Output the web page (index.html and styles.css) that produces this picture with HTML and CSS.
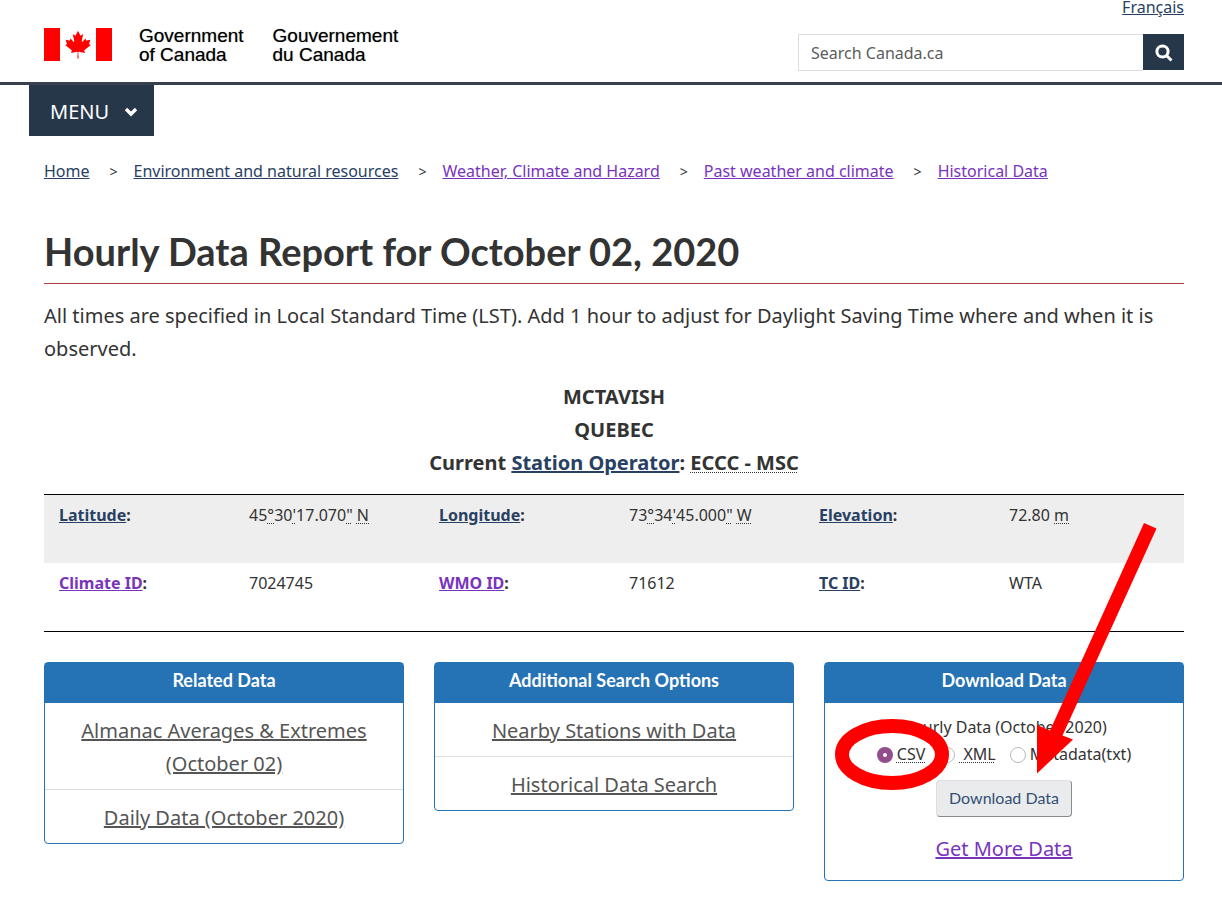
FILE: index.html
```html
<!DOCTYPE html>
<html lang="en">
<head>
<meta charset="utf-8">
<title>Hourly Data Report for October 02, 2020</title>
<link rel="stylesheet" href="styles.css">
</head>
<body>
<header class="site-header">
  <a class="brand" href="#" aria-label="Government of Canada">
    <svg class="flag" viewBox="0 0 9890 4800" aria-hidden="true">
      <path d="M0 0h2330v4800H0zM7560 0h2330v4800H7560z"/>
      <path transform="translate(145 0)" d="m4890 4430-45-863a95 95 0 0 1 111-98l859 151-116-320a65 65 0 0 1 20-73l941-762-212-99a65 65 0 0 1-34-79l186-572-542 115a65 65 0 0 1-73-38l-105-247-423 454a65 65 0 0 1-111-57l204-1052-327 189a65 65 0 0 1-91-27l-332-652-332 652a65 65 0 0 1-91 27l-327-189 204 1052a65 65 0 0 1-111 57l-423-454-105 247a65 65 0 0 1-73 38l-542-115 186 572a65 65 0 0 1-34 79l-212 99 941 762a65 65 0 0 1 20 73l-116 320 859-151a95 95 0 0 1 111 98l-45 863z"/>
    </svg>
    <span class="brand-name">Government<br>of Canada</span>
    <span class="brand-name" lang="fr">Gouvernement<br>du Canada</span>
  </a>
  <div class="header-tools">
    <a class="language" href="#" lang="fr">Français</a>
    <form class="search">
      <input class="search-box" type="search" placeholder="Search Canada.ca" aria-label="Search Canada.ca">
      <button class="search-button" type="button" aria-label="Search">
        <svg viewBox="0 0 18 18" aria-hidden="true"><circle cx="7.500" cy="7.500" r="5.600"/><path d="m11.500 11.500 5 5"/></svg>
      </button>
    </form>
  </div>
</header>
<nav class="menu-bar">
  <button class="menu-button" type="button">MENU
    <svg viewBox="0 0 14 10" aria-hidden="true"><path d="m2 2 5 5 5-5"/></svg>
  </button>
</nav>
<nav aria-label="Breadcrumb">
  <ol class="breadcrumb">
    <li><a href="#">Home</a></li>
    <li><a href="#">Environment and natural resources</a></li>
    <li><a class="visited" href="#">Weather, Climate and Hazard</a></li>
    <li><a class="visited" href="#">Past weather and climate</a></li>
    <li><a class="visited" href="#">Historical Data</a></li>
  </ol>
</nav>
<main class="content">
  <h1>Hourly Data Report for October 02, 2020</h1>
  <p class="intro">All times are specified in Local Standard Time (LST). Add 1 hour to adjust for Daylight Saving Time where and when it is observed.</p>
  <div class="station">
    <div>MCTAVISH</div>
    <div>QUEBEC</div>
    <div>Current <a href="#">Station Operator</a>: <abbr>ECCC - MSC</abbr></div>
  </div>
  <table class="metadata">
    <tr>
      <th scope="row"><a href="#">Latitude</a>:</th>
      <td>45<abbr>°</abbr>30<abbr>'</abbr>17.070<abbr>"</abbr> <abbr>N</abbr></td>
      <th scope="row"><a href="#">Longitude</a>:</th>
      <td>73<abbr>°</abbr>34<abbr>'</abbr>45.000<abbr>"</abbr> <abbr>W</abbr></td>
      <th scope="row"><a href="#">Elevation</a>:</th>
      <td>72.80 <abbr>m</abbr></td>
    </tr>
    <tr>
      <th scope="row"><a class="visited" href="#">Climate ID</a>:</th>
      <td>7024745</td>
      <th scope="row"><a class="visited" href="#">WMO ID</a>:</th>
      <td>71612</td>
      <th scope="row"><a href="#">TC ID</a>:</th>
      <td>WTA</td>
    </tr>
  </table>
  <div class="panels">
    <section class="panel">
      <h2>Related Data</h2>
      <ul class="panel-links">
        <li><a href="#">Almanac Averages &amp; Extremes (October 02)</a></li>
        <li><a href="#">Daily Data (October 2020)</a></li>
      </ul>
    </section>
    <section class="panel">
      <h2>Additional Search Options</h2>
      <ul class="panel-links">
        <li><a href="#">Nearby Stations with Data</a></li>
        <li><a href="#">Historical Data Search</a></li>
      </ul>
    </section>
    <section class="panel">
      <h2>Download Data</h2>
      <form class="download">
        <fieldset class="formats">
          <legend>Hourly Data (October 2020)</legend>
          <div class="format-row">
            <label><input type="radio" name="format" checked><abbr>CSV</abbr></label>
            <label><input type="radio" name="format"><abbr>&nbsp;XML</abbr></label>
            <label><input type="radio" name="format">Metadata(txt)</label>
          </div>
        </fieldset>
        <button class="download-button" type="button">Download Data</button>
        <a class="more visited" href="#">Get More Data</a>
      </form>
      <svg class="callout" viewBox="824 520 360 280" aria-hidden="true">
        <ellipse cx="892" cy="754.5" rx="50" ry="28.5"/>
        <path d="M1144 523l12.500 5.500L1062.500 735.500 1073 739.500 1037 773.500V725l13 5.500z"/>
      </svg>
    </section>
  </div>
</main>
</body>
</html>
```
FILE: styles.css
```css
* { box-sizing: border-box; }

body {
  margin: 0;
  background: #fff;
  color: #333;
  font: 20px/33px "Noto Sans", sans-serif;
}

a { color: #284162; }
a.visited { color: #7834bc; }
button, input { font-family: inherit; margin: 0; }
ul, ol { list-style: none; margin: 0; padding: 0; }

abbr {
  text-decoration: underline dotted 1px;
  text-decoration-skip-ink: none;
  text-underline-offset: 2px;
}

.site-header {
  display: flex;
  justify-content: space-between;
  align-items: flex-start;
  height: 85px;
  padding: 0 38px 0 44px;
  border-bottom: 3px solid #38414d;
}

.brand {
  display: flex;
  padding-top: 26px;
  color: #000;
  text-decoration: none;
}

.flag {
  width: 68px;
  height: 33px;
  margin: 2px 27px 0 0;
  fill: #f00;
}

.brand-name {
  margin-right: 29px;
  font: 19px/19px "Liberation Sans", Arial, sans-serif;
  text-shadow: 0 0 1px rgba(0, 0, 0, 0.5);
}

.header-tools {
  display: flex;
  flex-direction: column;
  align-items: flex-end;
  width: 386px;
}

.language { font-size: 16px; line-height: 14px; }

.search {
  display: flex;
  align-items: flex-start;
  width: 100%;
  margin-top: 20px;
}

.search-box {
  flex: 1;
  min-width: 0;
  height: 37px;
  padding: 0 12px;
  border: 1px solid #ddd;
  border-right: 0;
  border-radius: 0;
  font-size: 16px;
}

.search-box::placeholder { color: #5c5c5c; }

.search-button {
  width: 41px;
  height: 36px;
  padding: 2px 0 0;
  border: 0;
  background: #26374a;
}

.search-button svg {
  display: block;
  width: 18px;
  height: 18px;
  margin: 0 auto;
  fill: none;
  stroke: #fff;
  stroke-width: 3;
}

.menu-bar { display: flex; padding-left: 29px; }

.menu-button {
  display: flex;
  align-items: center;
  gap: 15px;
  height: 51px;
  padding: 2px 16px 0 21px;
  border: 0;
  background: #26374a;
  color: #fff;
  font-size: 20px;
}

.menu-button svg {
  width: 14px;
  height: 10px;
  fill: none;
  stroke: #fff;
  stroke-width: 3.4;
}

.breadcrumb {
  display: flex;
  flex-wrap: wrap;
  padding: 22px 38px 0 44px;
  font-size: 16px;
  line-height: 26px;
}

.breadcrumb li + li::before {
  content: ">";
  padding: 0 16px 0 20px;
  font-size: 14px;
}

.content { padding: 0 38px 16px 44px; }

h1 {
  margin: 43px 0 15px;
  padding-bottom: 8px;
  border-bottom: 1px solid #af3c43;
  font: 700 38px/47px Lato, sans-serif;
}

.intro { margin: 0 0 15px; }

.station {
  margin-bottom: 15px;
  text-align: center;
  font-weight: 700;
}

.metadata {
  width: 100%;
  table-layout: fixed;
  border-collapse: separate;
  border-spacing: 0;
  border-top: 1px solid #000;
  border-bottom: 1px solid #000;
  font-size: 16px;
  line-height: 26px;
}

.metadata tr { height: 68px; }
.metadata tr:first-child { background: #eee; }

.metadata th,
.metadata td {
  padding: 7px 15px 0;
  text-align: left;
  vertical-align: top;
}

.panels {
  display: grid;
  grid-template-columns: repeat(3, 1fr);
  align-items: start;
  gap: 30px;
  margin-top: 30px;
}

.panel {
  position: relative;
  border: 1px solid #2572b4;
  border-radius: 4px;
  text-align: center;
}

.panel h2 {
  margin: 0;
  padding: 7px 15px 13px;
  background: #2572b4;
  color: #fff;
  font: 700 18px/20px Lato, sans-serif;
}

.panel-links li { padding: 11px 15px 9px; }
.panel-links li + li { border-top: 1px solid #ddd; }
.panel-links a { color: #555; }

.download {
  display: flex;
  flex-direction: column;
  align-items: center;
  padding: 11px 15px 15px;
}

.formats {
  min-width: 0;
  margin: 0;
  padding: 0;
  border: 0;
  font-size: 16px;
  line-height: 27px;
}

.formats legend { margin: 0 auto; padding: 0; }

.format-row { display: flex; gap: 14px; }

.format-row label {
  display: flex;
  align-items: center;
  gap: 4px;
}

.format-row input {
  appearance: none;
  width: 16px;
  height: 16px;
  border: 1px solid #bbb;
  border-radius: 50%;
  background: #fff;
}

.format-row input:checked { border: 6px solid #924d8b; }

.download-button {
  height: 37px;
  margin: 12px 0 15px;
  padding: 0 12px 3px;
  border: 1px outset #dcdee1;
  border-radius: 4px;
  background: #eaebed;
  color: #335075;
  font: 16px/23px Lato, sans-serif;
}

.callout {
  position: absolute;
  top: -143px;
  left: -1px;
  width: 360px;
  height: 280px;
  pointer-events: none;
}

.callout ellipse {
  fill: none;
  stroke: #f00;
  stroke-width: 14;
}

.callout path { fill: #f00; }
```
